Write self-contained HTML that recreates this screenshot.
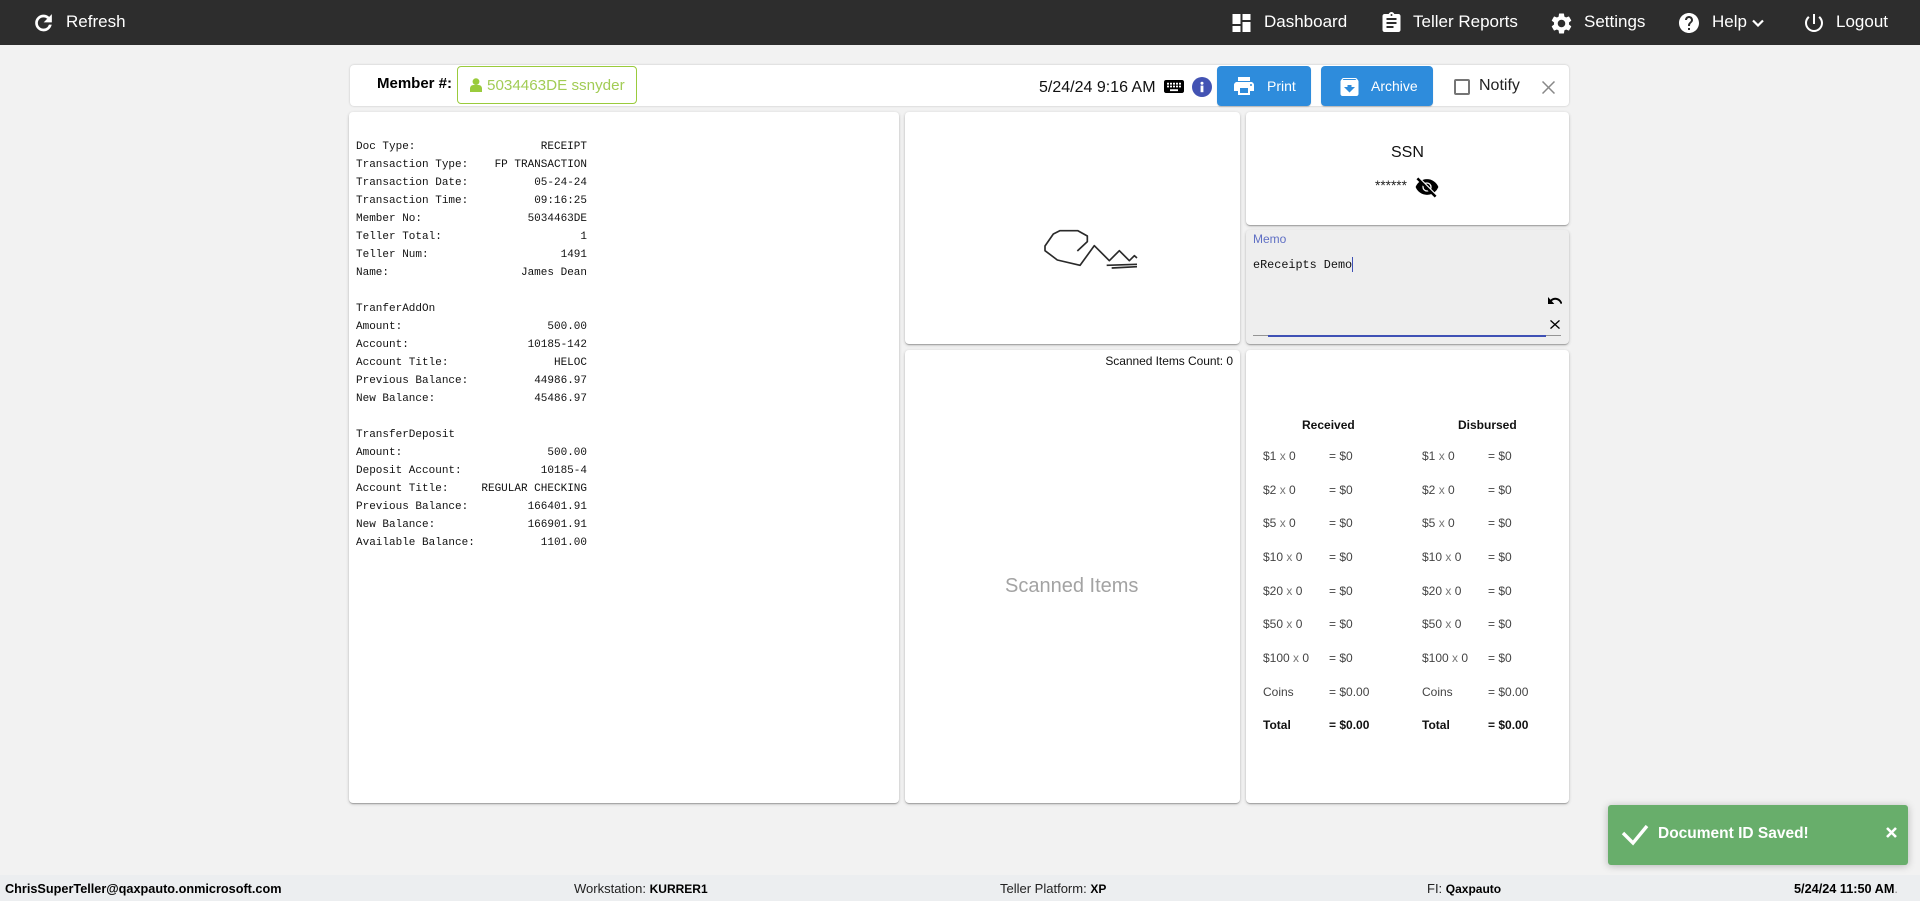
<!DOCTYPE html>
<html><head><meta charset="utf-8"><title>eReceipts</title>
<style>
html,body{margin:0;padding:0;width:1920px;height:901px;overflow:hidden;background:#f2f2f2;font-family:"Liberation Sans",sans-serif;color:#000}
.a{position:absolute}
.t{position:absolute;white-space:nowrap;line-height:20px}
svg{position:absolute;display:block}
.card{position:absolute;background:#fff;border-radius:4px;box-shadow:0 1px 3px rgba(0,0,0,.2),0 1px 1px rgba(0,0,0,.14),0 2px 1px -1px rgba(0,0,0,.12)}
.nav{color:#fff;font-size:17px;top:12px}
.btn{position:absolute;top:66px;height:40px;background:#2e8cdc;border-radius:4px;box-shadow:0 1px 1px rgba(0,0,0,.2)}
#rc{position:absolute;left:356px;top:138px;width:231px;font:11px/18px "Liberation Mono",monospace;color:#111}
#rc div{height:18px;display:flex;justify-content:space-between;white-space:pre}
.c{font-size:12px;color:#444}
.c i{font-style:normal;color:#777}
.b{font-size:12px;font-weight:bold;color:#111}
.f{font-size:13px;color:#222;top:879px}
.f b{font-size:12px;color:#000}
</style></head><body>

<div class="a" style="left:0;top:0;width:1920px;height:45px;background:#2d2d2d"></div>
<svg style="left:35px;top:15px" width="17" height="16" viewBox="4 4 16 16" fill="#fff" stroke="#fff" stroke-width=".7" overflow="visible"><path d="M17.65 6.35C16.2 4.9 14.21 4 12 4c-4.42 0-7.99 3.58-7.99 8s3.57 8 7.99 8c3.73 0 6.84-2.55 7.73-6h-2.08c-.82 2.33-3.04 4-5.65 4-3.31 0-6-2.69-6-6s2.69-6 6-6c1.66 0 3.14.69 4.22 1.78L13 11h7V4l-2.35 2.35z"/></svg>
<div class="t nav" style="left:66px">Refresh</div>
<svg style="left:1232px;top:14px" width="19" height="18" viewBox="3 3 18 18" fill="#fff"><path d="M3 13h8V3H3v10zm0 8h8v-6H3v6zm10 0h8V11h-8v10zm0-18v6h8V3h-8z"/></svg>
<div class="t nav" style="left:1264px">Dashboard</div>
<svg style="left:1382px;top:12px" width="19" height="20" viewBox="3 1 18 20" fill="#fff"><path d="M19 3h-4.18C14.4 1.84 13.3 1 12 1c-1.3 0-2.4.84-2.82 2H5c-1.1 0-2 .9-2 2v14c0 1.1.9 2 2 2h14c1.1 0 2-.9 2-2V5c0-1.1-.9-2-2-2zm-7 0c.55 0 1 .45 1 1s-.45 1-1 1-1-.45-1-1 .45-1 1-1zm2 14H7v-2h7v2zm3-4H7v-2h10v2zm0-4H7V7h10v2z"/></svg>
<div class="t nav" style="left:1413px">Teller Reports</div>
<svg style="left:1549px;top:11px" width="25" height="25" viewBox="0 0 24 24" fill="#fff"><path d="M19.14 12.94c.04-.3.06-.61.06-.94 0-.32-.02-.64-.07-.94l2.03-1.58a.49.49 0 0 0 .12-.61l-1.92-3.32a.488.488 0 0 0-.59-.22l-2.39.96c-.5-.38-1.03-.7-1.62-.94l-.36-2.54a.484.484 0 0 0-.48-.41h-3.84c-.24 0-.43.17-.47.41l-.36 2.54c-.59.24-1.13.57-1.62.94l-2.39-.96c-.22-.08-.47 0-.59.22L2.74 8.87c-.12.21-.08.47.12.61l2.03 1.58c-.05.3-.09.63-.09.94s.02.64.07.94l-2.03 1.58a.49.49 0 0 0-.12.61l1.92 3.32c.12.22.37.29.59.22l2.39-.96c.5.38 1.03.7 1.62.94l.36 2.54c.05.24.24.41.48.41h3.84c.24 0 .44-.17.47-.41l.36-2.54c.59-.24 1.13-.56 1.62-.94l2.39.96c.22.08.47 0 .59-.22l1.92-3.32c.12-.22.07-.47-.12-.61l-2.01-1.58zM12 15.6c-1.98 0-3.6-1.62-3.6-3.6s1.62-3.6 3.6-3.6 3.6 1.62 3.6 3.6-1.62 3.6-3.6 3.6z"/></svg>
<div class="t nav" style="left:1584px">Settings</div>
<svg style="left:1679px;top:13px" width="20" height="20" viewBox="2 2 20 20" fill="#fff"><path d="M12 2C6.48 2 2 6.48 2 12s4.48 10 10 10 10-4.48 10-10S17.52 2 12 2zm1 17h-2v-2h2v2zm2.07-7.75l-.9.92C13.45 12.9 13 13.5 13 15h-2v-.5c0-1.1.45-2.1 1.17-2.83l1.24-1.26c.37-.36.59-.86.59-1.41 0-1.1-.9-2-2-2s-2 .9-2 2H8c0-2.21 1.79-4 4-4s4 1.79 4 4c0 .88-.36 1.68-.93 2.25z"/></svg>
<div class="t nav" style="left:1712px">Help</div>
<svg style="left:1752px;top:19px" width="12" height="8" viewBox="0 0 12 8" fill="none" stroke="#fff" stroke-width="2.2"><path d="M1 1.5l5 5 5-5"/></svg>
<svg style="left:1805px;top:14px" width="18" height="18" viewBox="3 3 18 18" fill="#fff"><path d="M13 3h-2v10h2V3zm4.83 2.17l-1.42 1.42C17.99 7.86 19 9.81 19 12c0 3.87-3.13 7-7 7s-7-3.13-7-7c0-2.19 1.01-4.14 2.58-5.42L6.17 5.17C4.23 6.82 3 9.26 3 12c0 4.97 4.03 9 9 9s9-4.03 9-9c0-2.74-1.23-5.18-3.17-6.83z"/></svg>
<div class="t nav" style="left:1836px">Logout</div>

<div class="a" style="left:350px;top:65px;width:1219px;height:41px;background:#fff;border-radius:4px;box-shadow:0 0 2px rgba(0,0,0,.2)"></div>
<div class="t" style="left:377px;top:74px;font-size:15px;font-weight:bold">Member #:</div>
<div class="a" style="left:457px;top:66px;width:178px;height:36px;border:1px solid #9acb3c;border-radius:4px;background:#fff"></div>
<svg style="left:470px;top:78px" width="12" height="14" viewBox="0 0 12 14" fill="#9acb3c"><circle cx="6" cy="3.6" r="3.4"/><path d="M0 14v-3.4C0 8.4 1.6 7 3.4 7h5.2C10.4 7 12 8.4 12 10.6V14z"/></svg>
<div class="t" style="left:487px;top:76px;font-size:15.2px;color:#a2cc55">5034463DE ssnyder</div>
<div class="t" style="left:1039px;top:78px;font-size:16px;color:#111">5/24/24 9:16 AM</div>
<svg style="left:1164px;top:80px" width="20" height="13" viewBox="2 5 20 14" preserveAspectRatio="none" fill="#000"><path d="M20 5H4c-1.1 0-1.99.9-1.99 2L2 17c0 1.1.9 2 2 2h16c1.1 0 2-.9 2-2V7c0-1.1-.9-2-2-2zm-9 3h2v2h-2V8zm0 3h2v2h-2v-2zM8 8h2v2H8V8zm0 3h2v2H8v-2zm-1 2H5v-2h2v2zm0-3H5V8h2v2zm9 7H8v-2h8v2zm0-4h-2v-2h2v2zm0-3h-2V8h2v2zm3 3h-2v-2h2v2zm0-3h-2V8h2v2z"/></svg>
<svg style="left:1192px;top:77px" width="20" height="20" viewBox="0 0 20 20"><circle cx="10" cy="10" r="10" fill="#4353b3"/><rect x="8.6" y="8.6" width="2.8" height="6.6" fill="#fff"/><circle cx="10" cy="6.2" r="1.5" fill="#fff"/></svg>
<div class="btn" style="left:1217px;width:94px"></div>
<svg style="left:1234px;top:77px" width="20" height="18" viewBox="2 3 20 18" fill="#fff"><path d="M19 8H5c-1.66 0-3 1.34-3 3v6h4v4h12v-4h4v-6c0-1.66-1.34-3-3-3zm-3 11H8v-5h8v5zm3-7c-.55 0-1-.45-1-1s.45-1 1-1 1 .45 1 1-.45 1-1 1zm-1-9H6v4h12V3z"/></svg>
<div class="t" style="left:1267px;top:76px;font-size:14px;color:#fff">Print</div>
<div class="btn" style="left:1321px;width:112px"></div>
<svg style="left:1340px;top:78px" width="19" height="18" viewBox="3 3 18 18" fill="#fff"><path d="M20.54 5.23l-1.39-1.68C18.88 3.21 18.47 3 18 3H6c-.47 0-.88.21-1.16.55L3.46 5.23C3.17 5.57 3 6.02 3 6.5V19c0 1.1.9 2 2 2h14c1.1 0 2-.9 2-2V6.5c0-.48-.17-.93-.46-1.27zM12 17.5L6.5 12H10v-2h4v2h3.5L12 17.5zM5.12 5l.81-1h12l.94 1H5.12z"/></svg>
<div class="t" style="left:1371px;top:76px;font-size:14px;color:#fff">Archive</div>
<div class="a" style="left:1454px;top:79px;width:12px;height:12px;border:2px solid #757575;border-radius:2px"></div>
<div class="t" style="left:1479px;top:76px;font-size:16px;color:#222">Notify</div>
<svg style="left:1542px;top:81px" width="13" height="13" viewBox="0 0 13 13" stroke="#888" stroke-width="1.5"><path d="M.5.5l12 12M12.5.5l-12 12"/></svg>

<div class="card" style="left:349px;top:112px;width:550px;height:691px"></div>
<div id="rc">
<div><span>Doc Type:</span><span>RECEIPT</span></div>
<div><span>Transaction Type:</span><span>FP TRANSACTION</span></div>
<div><span>Transaction Date:</span><span>05-24-24</span></div>
<div><span>Transaction Time:</span><span>09:16:25</span></div>
<div><span>Member No:</span><span>5034463DE</span></div>
<div><span>Teller Total:</span><span>1</span></div>
<div><span>Teller Num:</span><span>1491</span></div>
<div><span>Name:</span><span>James Dean</span></div>
<div></div>
<div><span>TranferAddOn</span></div>
<div><span>Amount:</span><span>500.00</span></div>
<div><span>Account:</span><span>10185-142</span></div>
<div><span>Account Title:</span><span>HELOC</span></div>
<div><span>Previous Balance:</span><span>44986.97</span></div>
<div><span>New Balance:</span><span>45486.97</span></div>
<div></div>
<div><span>TransferDeposit</span></div>
<div><span>Amount:</span><span>500.00</span></div>
<div><span>Deposit Account:</span><span>10185-4</span></div>
<div><span>Account Title:</span><span>REGULAR CHECKING</span></div>
<div><span>Previous Balance:</span><span>166401.91</span></div>
<div><span>New Balance:</span><span>166901.91</span></div>
<div><span>Available Balance:</span><span>1101.00</span></div>
</div>

<div class="card" style="left:905px;top:112px;width:335px;height:232px"></div>
<svg style="left:1000px;top:210px" width="200" height="90" viewBox="0 0 600 270" fill="none" stroke="#2a2a2a" stroke-width="5" stroke-linejoin="round"><path d="M232 123L262 95V78L233 62H180L160 72L135 108V122L172 150L240 166L283 107L328 152L358 122L388 152L403 137L411 144"/><path d="M320 166L411 163M335 174L411 170"/></svg>

<div class="card" style="left:1246px;top:112px;width:323px;height:113px"></div>
<div class="t" style="left:1391px;top:143px;font-size:16px;color:#111">SSN</div>
<div class="t" style="left:1375px;top:176px;font-size:13.7px;color:#222">******</div>
<svg style="left:1415px;top:175px" width="24" height="24" viewBox="0 0 24 24" fill="#000" stroke="#000" stroke-width=".7"><path d="M12 7c2.76 0 5 2.24 5 5 0 .65-.13 1.26-.36 1.83l2.92 2.92c1.51-1.26 2.7-2.89 3.43-4.75-1.73-4.39-6-7.5-11-7.5-1.4 0-2.74.25-3.98.7l2.16 2.16C10.74 7.13 11.35 7 12 7zM2 4.27l2.28 2.28.46.46C3.08 8.3 1.78 10.02 1 12c1.73 4.39 6 7.5 11 7.5 1.55 0 3.03-.3 4.38-.84l.42.42L19.73 22 21 20.73 3.27 3 2 4.27zM7.53 9.8l1.55 1.55c-.05.21-.08.43-.08.65 0 1.66 1.34 3 3 3 .22 0 .44-.03.65-.08l1.55 1.55c-.67.33-1.41.53-2.2.53-2.76 0-5-2.24-5-5 0-.79.2-1.53.53-2.2zm4.31-.78l3.15 3.15.02-.16c0-1.66-1.34-3-3-3l-.17.01z"/></svg>

<div class="card" style="left:1246px;top:230px;width:323px;height:114px;background:#eee"></div>
<div class="t" style="left:1253px;top:229px;font-size:12px;color:#5f6fc4">Memo</div>
<div class="t" style="left:1253px;top:255px;font:11.8px/20px 'Liberation Mono',monospace;color:#111">eReceipts Demo</div>
<div class="a" style="left:1352px;top:257px;width:1px;height:15px;background:#3f51b5"></div>
<svg style="left:1548px;top:297px" width="14" height="7" viewBox="2 7 20 9" preserveAspectRatio="none" fill="#000"><path d="M12.5 8c-2.65 0-5.05.99-6.9 2.6L2 7v9h9l-3.62-3.62c1.39-1.16 3.16-1.88 5.12-1.88 3.54 0 6.55 2.31 7.6 5.5l2.37-.78C21.08 11.03 17.15 8 12.5 8z"/></svg>
<svg style="left:1550px;top:320px" width="10" height="9" viewBox="5 5 14 14" preserveAspectRatio="none" fill="#000"><path d="M19 6.41L17.59 5 12 10.59 6.41 5 5 6.41 10.59 12 5 17.59 6.41 19 12 13.41 17.59 19 19 17.59 13.41 12z"/></svg>
<div class="a" style="left:1253px;top:335px;width:308px;height:1px;background:#949494"></div>
<div class="a" style="left:1268px;top:335px;width:278px;height:2px;background:#3f51b5"></div>

<div class="card" style="left:905px;top:350px;width:335px;height:453px"></div>
<div class="t" style="right:687px;top:351px;font-size:12px;letter-spacing:-.05px;color:#111">Scanned Items Count: 0</div>
<div class="t" style="left:1005px;top:576px;font-size:20px;color:#a3a3a3">Scanned Items</div>

<div class="card" style="left:1246px;top:350px;width:323px;height:453px"></div>
<div class="t b" style="left:1302px;top:415px">Received</div>
<div class="t b" style="left:1458px;top:415px">Disbursed</div>

<div class="t c" style="left:1263px;top:446px">$1 <i>x</i> 0</div><div class="t c" style="left:1329px;top:446px">= $0</div><div class="t c" style="left:1422px;top:446px">$1 <i>x</i> 0</div><div class="t c" style="left:1488px;top:446px">= $0</div>
<div class="t c" style="left:1263px;top:480px">$2 <i>x</i> 0</div><div class="t c" style="left:1329px;top:480px">= $0</div><div class="t c" style="left:1422px;top:480px">$2 <i>x</i> 0</div><div class="t c" style="left:1488px;top:480px">= $0</div>
<div class="t c" style="left:1263px;top:513px">$5 <i>x</i> 0</div><div class="t c" style="left:1329px;top:513px">= $0</div><div class="t c" style="left:1422px;top:513px">$5 <i>x</i> 0</div><div class="t c" style="left:1488px;top:513px">= $0</div>
<div class="t c" style="left:1263px;top:547px">$10 <i>x</i> 0</div><div class="t c" style="left:1329px;top:547px">= $0</div><div class="t c" style="left:1422px;top:547px">$10 <i>x</i> 0</div><div class="t c" style="left:1488px;top:547px">= $0</div>
<div class="t c" style="left:1263px;top:581px">$20 <i>x</i> 0</div><div class="t c" style="left:1329px;top:581px">= $0</div><div class="t c" style="left:1422px;top:581px">$20 <i>x</i> 0</div><div class="t c" style="left:1488px;top:581px">= $0</div>
<div class="t c" style="left:1263px;top:614px">$50 <i>x</i> 0</div><div class="t c" style="left:1329px;top:614px">= $0</div><div class="t c" style="left:1422px;top:614px">$50 <i>x</i> 0</div><div class="t c" style="left:1488px;top:614px">= $0</div>
<div class="t c" style="left:1263px;top:648px">$100 <i>x</i> 0</div><div class="t c" style="left:1329px;top:648px">= $0</div><div class="t c" style="left:1422px;top:648px">$100 <i>x</i> 0</div><div class="t c" style="left:1488px;top:648px">= $0</div>
<div class="t c" style="left:1263px;top:682px">Coins</div><div class="t c" style="left:1329px;top:682px">= $0.00</div><div class="t c" style="left:1422px;top:682px">Coins</div><div class="t c" style="left:1488px;top:682px">= $0.00</div>
<div class="t b" style="left:1263px;top:715px">Total</div><div class="t b" style="left:1329px;top:715px">= $0.00</div><div class="t b" style="left:1422px;top:715px">Total</div><div class="t b" style="left:1488px;top:715px">= $0.00</div>

<div class="a" style="left:1608px;top:805px;width:300px;height:60px;background:#68ae6b;border-radius:3px;box-shadow:0 1px 8px rgba(0,0,0,.25)"></div>
<svg style="left:1620px;top:822px" width="30" height="26" viewBox="1620 822 30 26" fill="none" stroke="#fff" stroke-width="3.4"><path d="M1623 833L1633 843L1647 826"/></svg>
<div class="t" style="left:1658px;top:824px;font-size:15.5px;font-weight:bold;color:#fff">Document ID Saved!</div>
<svg style="left:1886px;top:827px" width="11" height="11" viewBox="0 0 11 11" stroke="#fff" stroke-width="2.6"><path d="M1 1l9 9M10 1l-9 9"/></svg>

<div class="a" style="left:0;top:875px;width:1920px;height:26px;background:#eceef0"></div>
<div class="t" style="left:5px;top:879px;font-size:12.7px;font-weight:bold;color:#000">ChrisSuperTeller@qaxpauto.onmicrosoft.com</div>
<div class="t f" style="left:574px">Workstation: <b>KURRER1</b></div>
<div class="t f" style="left:1000px">Teller Platform: <b>XP</b></div>
<div class="t f" style="left:1427px">FI: <b>Qaxpauto</b></div>
<div class="t" style="left:1794px;top:879px;font-size:12.7px;font-weight:bold;color:#000">5/24/24 11:50 AM<span style="font-weight:normal;color:#888">.</span></div>
</body></html>
